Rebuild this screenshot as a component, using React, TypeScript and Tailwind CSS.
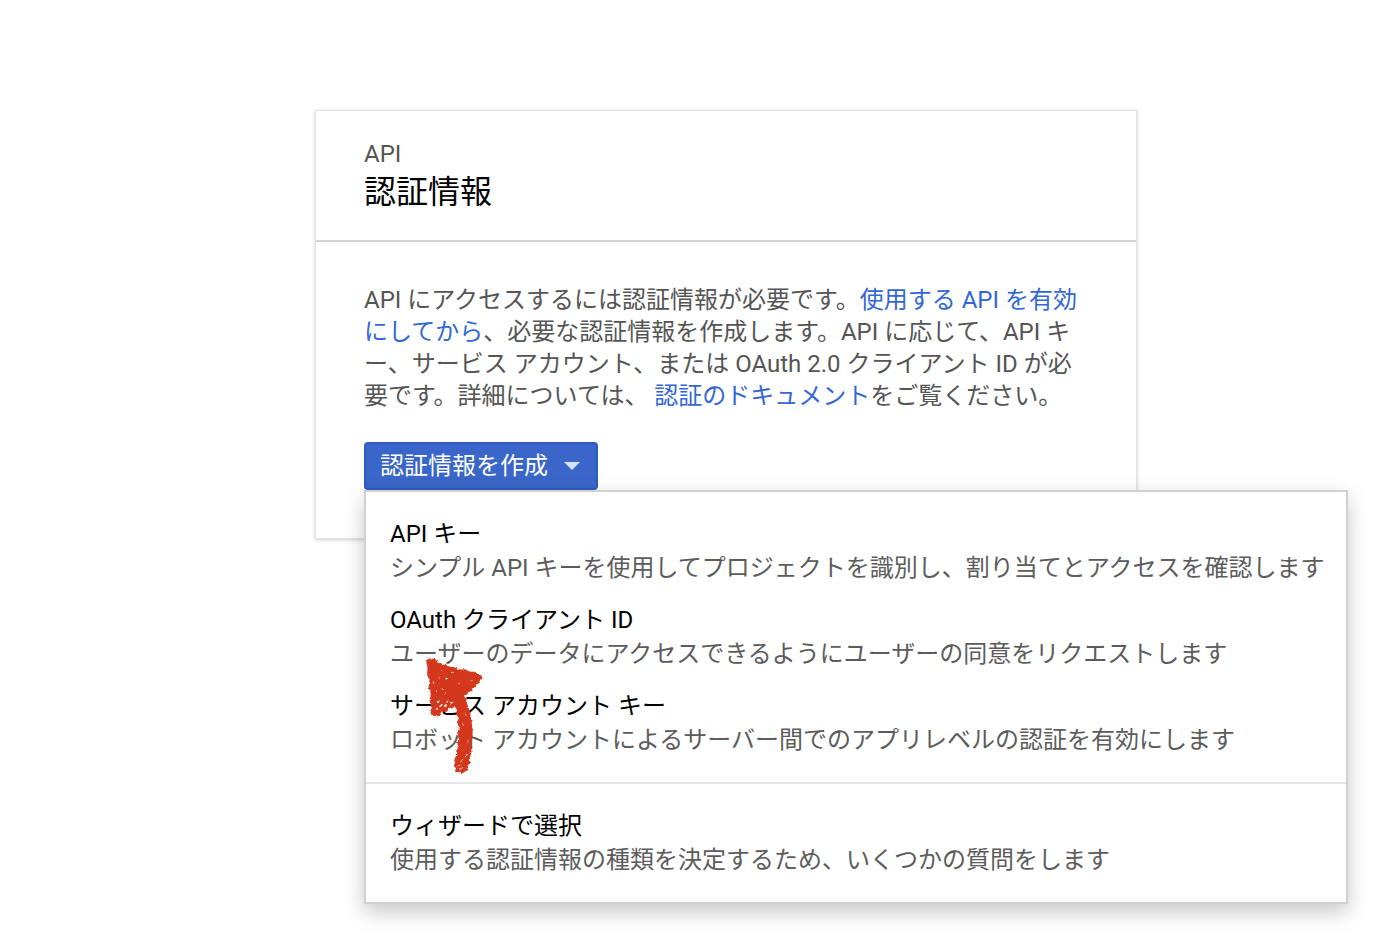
import { useState } from 'react'

// ─── Types ───────────────────────────────────────────────────────────────────

interface MenuEntry {
  id: string
  title: string
  description: string
}

// ─── Constants ───────────────────────────────────────────────────────────────

const CREDENTIAL_TYPES: MenuEntry[] = [
  {
    id: 'api_key',
    title: 'API キー',
    description: 'シンプル API キーを使用してプロジェクトを識別し、割り当てとアクセスを確認します',
  },
  {
    id: 'oauth_client',
    title: 'OAuth クライアント ID',
    description: 'ユーザーのデータにアクセスできるようにユーザーの同意をリクエストします',
  },
  {
    id: 'service_account',
    title: 'サービス アカウント キー',
    description: 'ロボット アカウントによるサーバー間でのアプリレベルの認証を有効にします',
  },
]

const WIZARD: MenuEntry[] = [
  {
    id: 'wizard',
    title: 'ウィザードで選択',
    description: '使用する認証情報の種類を決定するため、いくつかの質問をします',
  },
]

// ─── Pieces ──────────────────────────────────────────────────────────────────

function MenuGroup({ entries }: { entries: MenuEntry[] }) {
  return (
    <div role="group" className="py-4">
      {entries.map((entry) => (
        <button
          key={entry.id}
          type="button"
          role="menuitem"
          className="block w-full px-6 py-[9px] text-left leading-[34px] whitespace-nowrap hover:bg-gray-100"
        >
          <span className="block text-black">{entry.title}</span>
          <span className="block text-[#5c5c5c]">{entry.description}</span>
        </button>
      ))}
    </div>
  )
}

// Crayon arrow pointing at the OAuth entry
function CrayonArrow() {
  return (
    <svg
      viewBox="60 15 210 390"
      className="pointer-events-none absolute top-[158px] left-[54px] h-[130px] w-[70px]"
      aria-hidden="true"
    >
      <defs>
        <filter id="crayon" x="-10%" y="-10%" width="120%" height="120%">
          <feTurbulence type="fractalNoise" baseFrequency="0.12" numOctaves="2" seed="4" result="noise" />
          <feDisplacementMap in="SourceGraphic" in2="noise" scale="9" xChannelSelector="R" yChannelSelector="G" />
        </filter>
      </defs>
      <g filter="url(#crayon)">
        <path
          fill="#d4371c"
          stroke="#d4371c"
          strokeWidth="3"
          d="M80 46 L92 41 L108 45 L112 54 L134 60 L150 67 L164 68 L176 76 L194 74 L208 81 L224 82 L245 94 L245 102 L236 106 L238 113 L226 118 L228 124 L215 128 L216 136 L204 139 L201 147 L190 151 L198 168 L203 186 L208 198 L212 222 L216 250 L216 276 L212 300 L213 322 L208 338 L209 352 L202 362 L204 374 L193 380 L186 384 L180 379 L167 380 L169 368 L163 364 L167 350 L164 345 L173 326 L170 318 L177 304 L172 294 L179 282 L174 268 L178 246 L173 230 L178 220 L169 206 L172 194 L164 182 L156 190 L148 184 L140 199 L124 198 L116 212 L103 212 L93 207 L97 184 L90 168 L94 146 L87 126 L90 106 L83 90 L84 70 Z"
        />
        <g fill="none" stroke="#fff" strokeLinecap="round">
          <path strokeWidth="4" d="M139 98v5M113 173l3-3M141 171l5-3M153 175l5-4M120 184l6-5M134 183l5-4" />
          <path strokeWidth="2" d="M155 82l3 1M109 137v3M127 131l2 3M131 148l4-2M109 192l2-3M176 116l2-1M122 77l2 1M196 204l2 7M188 236l2 5M204 286l-1 6M200 328l-4 7M186 343l-3 8M174 363l6-3M180 373l8-5M100 111l1 5M210 106l4 1M116 96l2 2" />
        </g>
      </g>
    </svg>
  )
}

// ─── Page ────────────────────────────────────────────────────────────────────

export default function App() {
  const [open, setOpen] = useState(true)

  return (
    <main
      lang="ja"
      className="flex min-h-screen justify-center bg-white pt-[110px] pb-10 pl-[52px] font-[Roboto,'Noto_Sans_CJK_JP',sans-serif] text-2xl leading-8 text-[#555]"
    >
      <section className="w-full max-w-[822px] self-start border border-[#e2e2e2] bg-white shadow-[0_1px_4px_rgba(0,0,0,0.2)]">
        <header className="border-b-2 border-[#d3d3d3] px-12 pt-[27px] pb-[26px]">
          <p>API</p>
          <h1 className="text-[32px] leading-[44px] text-black">認証情報</h1>
        </header>

        <div className="px-12 pt-[42px] pb-12">
          <p className="[line-break:loose]">
            API にアクセスするには認証情報が必要です。
            <a href="#apis" className="text-[#3367d6]">使用する API を有効にしてから</a>
            、必要な認証情報を作成します。API に応じて、API キー、サービス アカウント、または OAuth 2.0 クライアント ID が必要です。詳細については、{' '}
            <a href="#docs" className="text-[#3367d6]">認証のドキュメント</a>
            をご覧ください。
          </p>

          <div className="relative mt-[30px] w-fit">
            <button
              type="button"
              aria-haspopup="menu"
              aria-expanded={open}
              onClick={() => setOpen(!open)}
              className="flex h-12 items-center gap-4 rounded-[4px] border-2 border-[#2f5bc0] bg-[#3a65c9] pr-4 pl-[14px] text-white"
            >
              認証情報を作成
              <svg viewBox="0 0 16 8" className="h-2 w-4" aria-hidden="true">
                <path d="M0 0h16L8 8z" fill="#d3e3fc" />
              </svg>
            </button>

            {open && (
              <div
                role="menu"
                className="absolute top-full left-0 w-[984px] border-2 border-[#d0d0d0] bg-white shadow-[0_8px_20px_rgba(0,0,0,0.22)]"
              >
                <MenuGroup entries={CREDENTIAL_TYPES} />
                <hr className="border-t-2 border-[#e5e5e5]" />
                <MenuGroup entries={WIZARD} />
                <CrayonArrow />
              </div>
            )}
          </div>
        </div>
      </section>
    </main>
  )
}
